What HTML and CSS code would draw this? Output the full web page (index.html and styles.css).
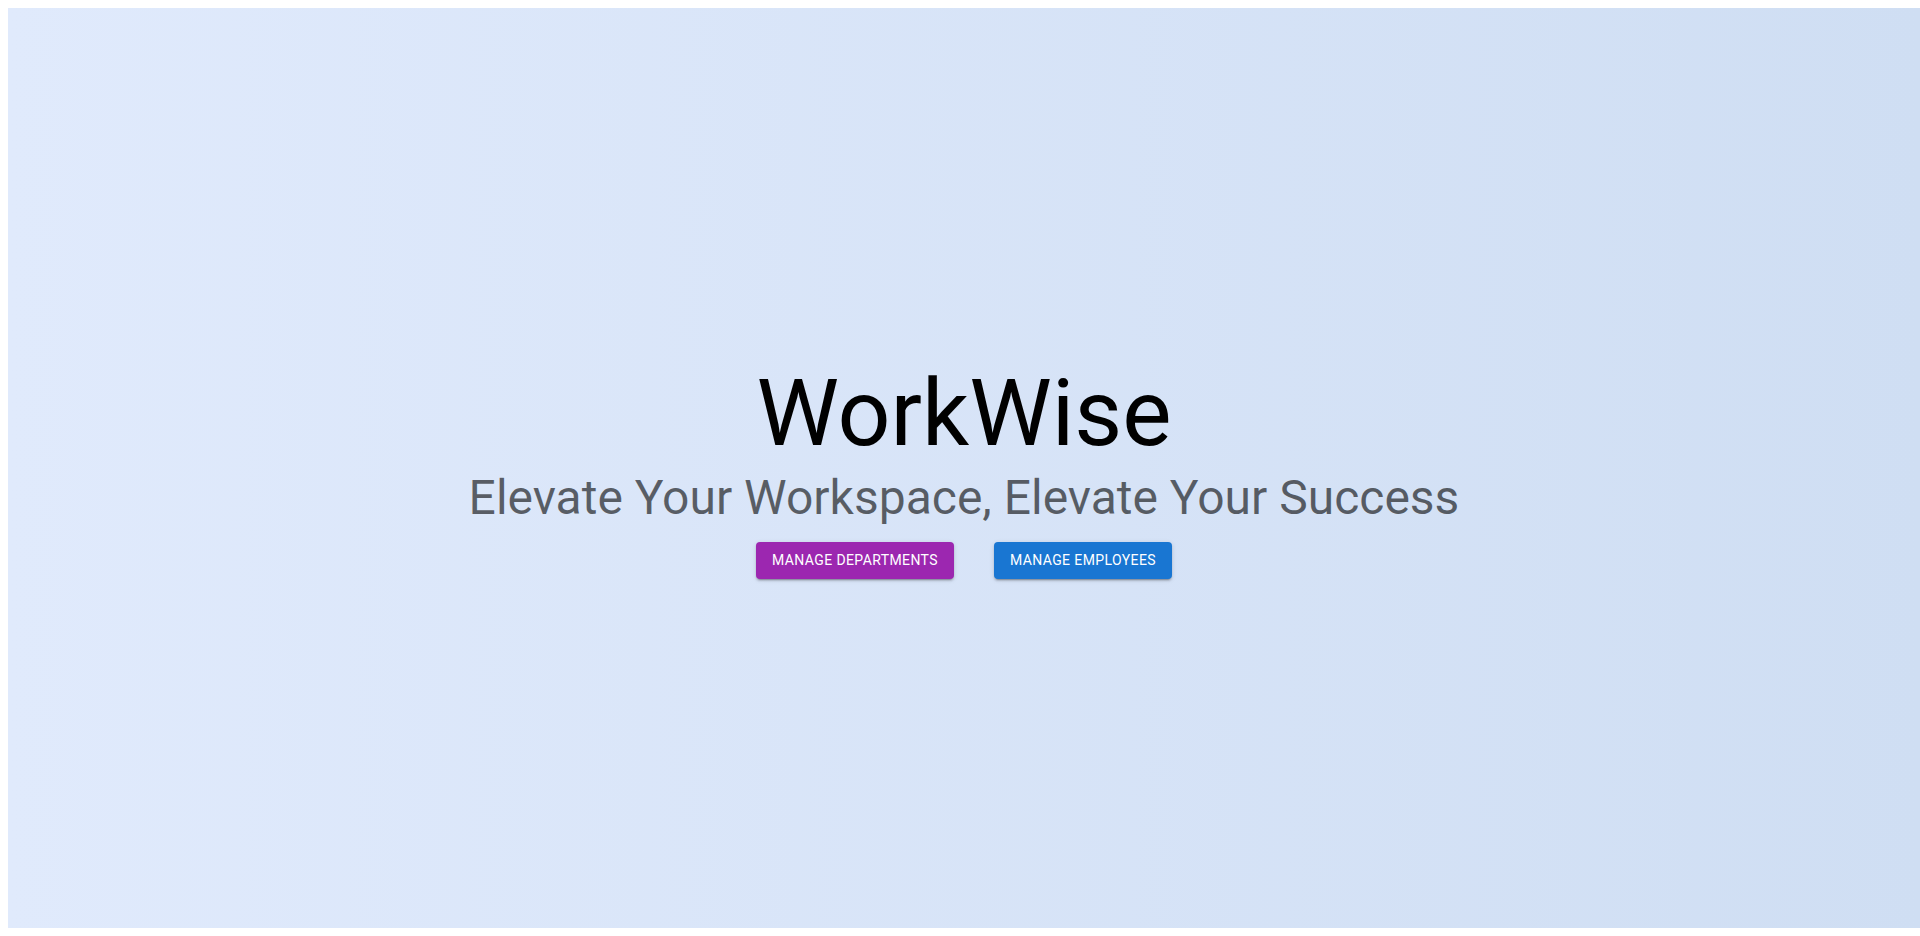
FILE: index.html
```html
<!DOCTYPE html>
<html>
<head>
<meta charset="utf-8">
<link rel="stylesheet" href="styles.css">
</head>
<body>
<div class="hero">
  <h1 class="title">WorkWise</h1>
  <h3 class="subtitle">Elevate Your Workspace, Elevate Your Success</h3>
  <div class="actions">
    <button class="btn btn-purple">Manage Departments</button>
    <button class="btn btn-blue">Manage Employees</button>
  </div>
</div>
</body>
</html>
```
FILE: styles.css
```css
html, body { background: #fff; }
body {
  margin: 8px 0 8px 8px;
  font-family: Roboto, "Liberation Sans", sans-serif;
}
.hero {
  box-sizing: border-box;
  height: 920px;
  padding-top: 3px;
  background: linear-gradient(to right, #e0eafc, #cfdef3);
  display: flex;
  flex-direction: column;
  align-items: center;
  justify-content: center;
}
.title {
  margin: 0;
  font-size: 93px;
  font-weight: 400;
  line-height: 1.167;
  color: #000;
}
.subtitle {
  margin: 1px 0 0;
  font-size: 48px;
  font-weight: 400;
  line-height: 1.167;
  color: rgba(0,0,0,0.6);
}
.actions {
  display: flex;
  gap: 40px;
  margin-top: 16px;
}
.btn {
  font-family: Roboto, "Liberation Sans", sans-serif;
  font-size: 14px;
  font-weight: 400;
  letter-spacing: 0.02857em;
  text-transform: uppercase;
  line-height: 1.75;
  padding: 6px 16px;
  border: 0;
  border-radius: 4px;
  color: #fff;
  box-shadow: 0px 3px 1px -2px rgba(0,0,0,0.2), 0px 2px 2px 0px rgba(0,0,0,0.14), 0px 1px 5px 0px rgba(0,0,0,0.12);
}
.btn-purple { background: #9c27b0; }
.btn-blue { background: #1976d2; }
```
